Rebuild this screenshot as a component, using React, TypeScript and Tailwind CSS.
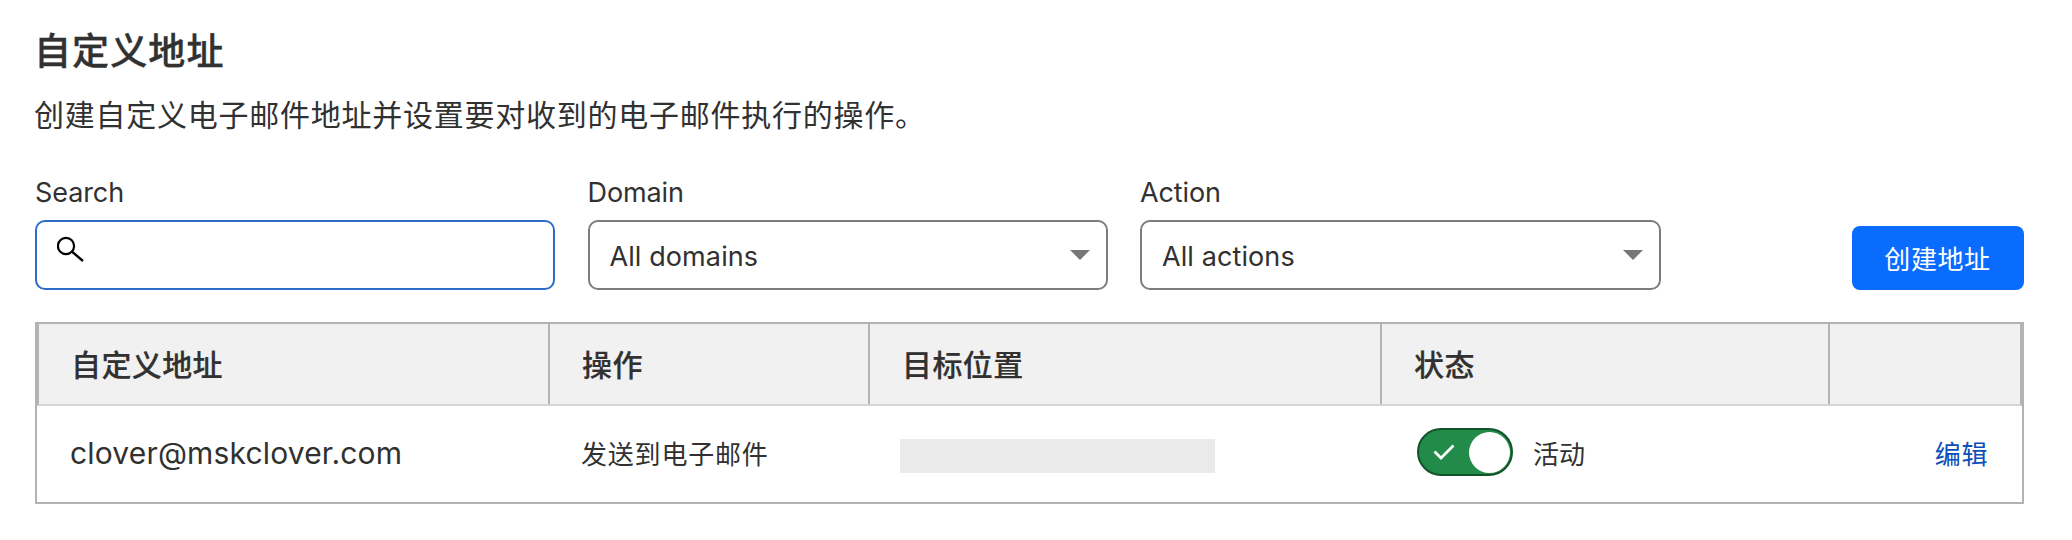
import type { ReactNode } from "react";

function Caret() {
  return (
    <svg className="h-[11px] w-5" viewBox="0 0 20 11" fill="#747678">
      <path d="M0 0H20L10 10Z" />
    </svg>
  );
}

function Field({ label, children }: { label: string; children: ReactNode }) {
  return (
    <div className="flex w-[520.5px] flex-col">
      <span className="h-[56px] pt-[11px] text-[27px] leading-[36px] tracking-[-0.1px]">{label}</span>
      {children}
    </div>
  );
}

function Select({ value }: { value: string }) {
  return (
    <button className="flex h-[70px] items-center justify-between rounded-[10px] border-2 border-[#7c7c7c] bg-white pr-4 pl-5">
      <span className="pt-[3px] text-[27px] leading-[36px] tracking-[0.1px]">{value}</span>
      <Caret />
    </button>
  );
}

function HeaderCell({ children }: { children: ReactNode }) {
  return (
    <div className="flex items-center border-r-2 border-[#b3b3b3] pt-[2px] pl-8 text-[30px] font-medium tracking-[0.4px] [-webkit-text-stroke:0.2px_#313131]">
      {children}
    </div>
  );
}

export default function App() {
  return (
    <main className="h-[540px] w-[2072px] bg-white pr-12 pl-[35px] font-['Inter','Noto_Sans_CJK_SC',sans-serif] text-[#313131]">
      <h1 className="-ml-px pt-[28px] text-[37px] leading-[48px] font-medium tracking-[1.1px] [-webkit-text-stroke:0.4px_#313131]">
        自定义地址
      </h1>
      <p className="-ml-px pt-[17px] text-[30px] leading-[44px] tracking-[0.75px]">
        创建自定义电子邮件地址并设置要对收到的电子邮件执行的操作。
      </p>
      <div className="mt-[27px] flex items-end justify-between">
        <div className="flex gap-8">
          <Field label="Search">
            <div className="h-[70px] w-[520px] rounded-[10px] border-2 border-[#2f6cca] bg-white pt-[14px] pl-5">
              <svg className="h-7 w-7" viewBox="0 0 28 28" fill="none" stroke="#000" strokeWidth="2.2">
                <circle cx="9" cy="10" r="8.1" />
                <path d="M14.8 15.5L26 25" strokeWidth="2.4" />
              </svg>
            </div>
          </Field>
          <Field label="Domain">
            <Select value="All domains" />
          </Field>
          <Field label="Action">
            <Select value="All actions" />
          </Field>
        </div>
        <button className="h-16 w-[172px] rounded-[8px] bg-[#0a6cff] pt-[2px] pr-px text-[26px] tracking-[0.6px] text-white">
          创建地址
        </button>
      </div>
      <section className="mt-8 h-[182px] border-2 border-[#b3b3b3]">
        <div className="grid h-[82px] grid-cols-[511px_320px_512px_448px_190px] border-r-2 border-b-2 border-l-2 border-r-[#b3b3b3] border-b-[#d6d6d6] border-l-[#b3b3b3] bg-[#f1f1f1]">
          <HeaderCell>自定义地址</HeaderCell>
          <HeaderCell>操作</HeaderCell>
          <HeaderCell>目标位置</HeaderCell>
          <HeaderCell>状态</HeaderCell>
          <div />
        </div>
        <div className="grid h-24 grid-cols-[512px_321px_514px_448px_190px] items-center text-[26px]">
          <span className="pb-[2px] pl-[33px] text-[30px] tracking-[0.17px]">clover@mskclover.com</span>
          <span className="pt-px pl-8 tracking-[0.8px]">发送到电子邮件</span>
          <span className="mt-[3px] ml-[30px] h-[34px] w-[315px] bg-[#eaeaea]" />
          <div className="flex items-center pl-[33px]">
            <span className="mb-1 flex h-12 w-24 items-center justify-between rounded-full border-2 border-[#14522a] bg-[#228b49] pr-px pl-[14px]">
              <svg className="h-[18px] w-[22px]" viewBox="0 0 22 18" fill="none" stroke="#fff" strokeWidth="2.8">
                <path d="M1.5 8.5L8 15L20.5 2.5" />
              </svg>
              <span className="size-[41px] rounded-full bg-white" />
            </span>
            <span className="pl-5">活动</span>
          </div>
          <span className="pt-px pr-[34px] text-right tracking-[0.6px] text-[#0b4fb8]">编辑</span>
        </div>
      </section>
    </main>
  );
}
